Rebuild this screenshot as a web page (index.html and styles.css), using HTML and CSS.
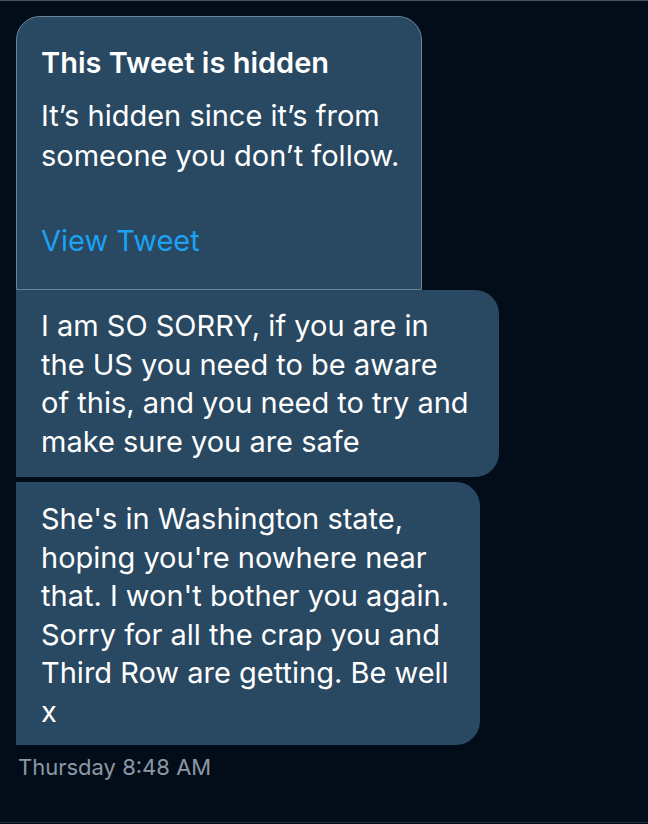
FILE: index.html
```html
<!DOCTYPE html>
<html lang="en">
<head>
<meta charset="utf-8">
<title>Messages</title>
<link rel="stylesheet" href="styles.css">
</head>
<body>
<div class="screen">
  <div class="thread">
    <div class="hidden-card">
      <div class="hidden-title">This Tweet is hidden</div>
      <p class="hidden-text">It’s hidden since it’s from someone you don’t follow.</p>
      <a class="view-link" href="#">View Tweet</a>
    </div>
    <div class="bubble bubble-first">I am SO SORRY, if you are in the US you need to be aware of this, and you need to try and make sure you are safe</div>
    <div class="bubble bubble-second">She's in Washington state, hoping you're nowhere near that. I won't bother you again. Sorry for all the crap you and Third Row are getting. Be well x</div>
    <div class="timestamp">Thursday 8:48 AM</div>
  </div>
</div>
</body>
</html>
```

FILE: styles.css
```css
html, body {
  margin: 0;
  padding: 0;
  background: #020d19;
}

body {
  font-family: Inter, Roboto, "Liberation Sans", sans-serif;
  color: #ffffff;
}

.screen {
  box-sizing: border-box;
  height: 823px;
  border-top: 1px solid #44525f;
  border-bottom: 1px solid #1c2b3a;
  overflow: hidden;
}

.thread {
  display: flex;
  flex-direction: column;
  align-items: flex-start;
  padding: 15px 0 0 16px;
}

.hidden-card {
  box-sizing: border-box;
  width: 406px;
  height: 274px;
  background: #294861;
  border: 1px solid #6a8397;
  border-radius: 24px 24px 0 0;
  padding: 27px 20px 0 24px;
}

.hidden-title {
  font-size: 29px;
  font-weight: 600;
  line-height: 38px;
}

.hidden-text {
  margin: 14px 0 0;
  font-size: 29px;
  line-height: 40px;
}

.view-link {
  display: block;
  margin-top: 45px;
  font-size: 29px;
  line-height: 40px;
  color: #1da1f2;
  text-decoration: none;
}

.bubble {
  box-sizing: border-box;
  background: #294861;
  font-size: 29px;
  line-height: 38.5px;
  border-radius: 0 24px 24px 0;
}

.bubble-first {
  width: 483px;
  padding: 17px 30px 16px 25px;
}

.bubble-second {
  width: 464px;
  margin-top: 5px;
  padding: 18px 20px 14px 25px;
}

.timestamp {
  margin-top: 10px;
  padding-left: 2px;
  font-size: 22px;
  line-height: 24px;
  color: #8b98a5;
}
```
